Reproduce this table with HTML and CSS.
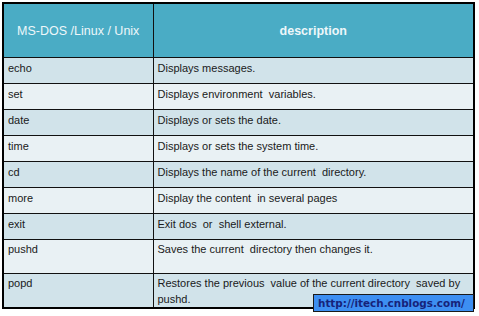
FILE: index.html
```html
<!DOCTYPE html>
<html>
<head>
<meta charset="utf-8">
<link rel="stylesheet" href="styles.css">
</head>
<body>
<div class="page">
  <table class="cmds">
    <thead>
      <tr class="head">
        <th class="c1">MS-DOS /Linux / Unix</th>
        <th class="c2 bold">description</th>
      </tr>
    </thead>
    <tbody>
      <tr class="odd"><td>echo</td><td>Displays messages.</td></tr>
      <tr class="even"><td>set</td><td>Displays environment&nbsp; variables.</td></tr>
      <tr class="odd"><td>date</td><td>Displays or sets the date.</td></tr>
      <tr class="even"><td>time</td><td>Displays or sets the system time.</td></tr>
      <tr class="odd"><td>cd</td><td>Displays the name of the current&nbsp; directory.</td></tr>
      <tr class="even"><td>more</td><td>Display the content&nbsp; in several pages</td></tr>
      <tr class="odd"><td>exit</td><td>Exit dos&nbsp; or&nbsp; shell external.</td></tr>
      <tr class="even tall"><td>pushd</td><td>Saves the current&nbsp; directory then changes it.</td></tr>
      <tr class="odd tall"><td>popd</td><td>Restores the previous&nbsp; value of the current directory&nbsp; saved by pushd.</td></tr>
    </tbody>
  </table>
  <div class="mark">http://itech.cnblogs.com/</div>
</div>
</body>
</html>
```
FILE: styles.css
```css
html, body {
  margin: 0;
  padding: 0;
  background: #ffffff;
}
.page {
  position: relative;
  width: 479px;
  height: 316px;
  padding: 2px 0 0 2px;
  box-sizing: border-box;
}
.cmds {
  border-collapse: collapse;
  border: 2px solid #000;
  width: 473px;
  font-family: "Liberation Sans", Arial, sans-serif;
  font-size: 11px;
  color: #1a1a1a;
  table-layout: fixed;
}
.cmds th, .cmds td {
  border: 1px solid #111;
  padding: 0 4px;
  text-align: left;
  box-sizing: border-box;
}
.cmds th.c1 { width: 150px; }
.head th {
  background: #4aacc5;
  color: #eef7fa;
  height: 54px;
  text-align: center;
  font-weight: normal;
  font-size: 12.5px;
  vertical-align: middle;
  padding-top: 2px;
}
.head th.bold { font-weight: bold; }
.cmds td {
  height: 26px;
  vertical-align: top;
  padding-top: 3px;
  line-height: 14px;
}
.cmds tr.tall td {
  height: 34px;
  padding-top: 1px;
  line-height: 16px;
}
.odd td { background: #d1e3ea; }
.even td { background: #e9f1f4; }
.mark {
  position: absolute;
  left: 313px;
  top: 294px;
  width: 161px;
  height: 18px;
  box-sizing: border-box;
  border: 1px solid #1a1a1a;
  background: #3d8ff2;
  color: #16237a;
  font-family: "DejaVu Sans", Verdana, sans-serif;
  font-weight: bold;
  font-size: 10.4px;
  line-height: 16px;
  padding-left: 4px;
}
```
